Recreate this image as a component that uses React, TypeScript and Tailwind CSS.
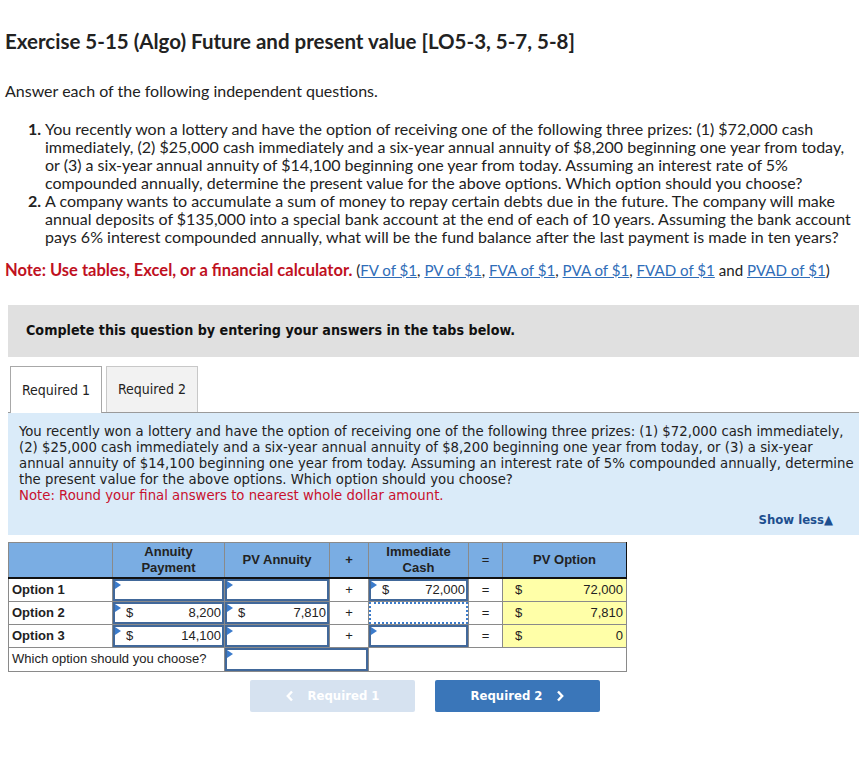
import React from "react";

const Tri = () => (
  <span className="absolute left-0 top-0 h-0 w-0 border-l-[6px] border-y-[4px] border-l-[#3b7bcb] border-y-transparent" />
);

type CellProps = {
  value?: string;
  dollar?: boolean;
  flag?: boolean;
  dotted?: boolean;
};

const InputCell = ({ value, dollar, flag = true, dotted }: CellProps) => (
  <td className="border border-[#8a8a8a] p-0 align-middle">
    <div
      className={
        "relative flex h-[22px] items-center justify-between border-2 bg-white pl-[11px] pr-[1px] " +
        (dotted ? "border-dotted border-[#3b7bcb]" : "border-[#41689a]")
      }
    >
      {flag && <Tri />}
      <span>{dollar ? "$" : ""}</span>
      <span>{value}</span>
    </div>
  </td>
);

const Sign = ({ s }: { s: string }) => (
  <td className="border border-[#8a8a8a] bg-white text-center">{s}</td>
);

const PvCell = ({ value }: { value: string }) => (
  <td className="border border-[#8a8a8a] bg-[#ffffa8] p-0">
    <div className="flex items-center justify-between pl-[12px] pr-[3px]">
      <span>$</span>
      <span>{value}</span>
    </div>
  </td>
);

const Chevron = ({ dir }: { dir: "left" | "right" }) => (
  <svg width="8" height="12" viewBox="0 0 8 12" fill="none" stroke="currentColor" strokeWidth="2.4">
    {dir === "left" ? <path d="M6 1.5 1.8 6 6 10.5" /> : <path d="M2 1.5 6.2 6 2 10.5" />}
  </svg>
);

const links = ["FV of $1", "PV of $1", "FVA of $1", "PVA of $1", "FVAD of $1"];

export default function App() {
  return (
    <div className="min-h-[777px] w-[859px] overflow-hidden bg-white pb-10 pl-[5px] text-[#222] [font-family:Lato,'Open_Sans',sans-serif]">
      <h1 className="pt-[29px] text-[20.5px] font-bold leading-[24px] text-[#222]">
        Exercise 5-15 (Algo) Future and present value [LO5-3, 5-7, 5-8]
      </h1>

      <p className="mt-[29px] text-[16px] leading-[18px]">Answer each of the following independent questions.</p>

      <ol className="mt-[20px] whitespace-nowrap text-[16px] leading-[18px]">
        <li className="flex">
          <span className="w-[40px] shrink-0 pl-[23px] font-bold">1.</span>
          <span>
            You recently won a lottery and have the option of receiving one of the following three prizes: (1) $72,000 cash
            <br />
            immediately, (2) $25,000 cash immediately and a six-year annual annuity of $8,200 beginning one year from today,
            <br />
            or (3) a six-year annual annuity of $14,100 beginning one year from today. Assuming an interest rate of 5%
            <br />
            compounded annually, determine the present value for the above options. Which option should you choose?
          </span>
        </li>
        <li className="flex">
          <span className="w-[40px] shrink-0 pl-[23px] font-bold">2.</span>
          <span>
            A company wants to accumulate a sum of money to repay certain debts due in the future. The company will make
            <br />
            annual deposits of $135,000 into a special bank account at the end of each of 10 years. Assuming the bank account
            <br />
            pays 6% interest compounded annually, what will be the fund balance after the last payment is made in ten years?
          </span>
        </li>
      </ol>

      <p className="mt-[15px] text-[15.1px] leading-[18px]">
        <span className="text-[16.5px] font-bold text-[#c0111f]">Note: Use tables, Excel, or a financial calculator.</span> (
        {links.map((l, i) => (
          <React.Fragment key={l}>
            <a className="text-[#2f6db8] underline">{l}</a>
            {i < links.length - 1 ? ", " : ""}
          </React.Fragment>
        ))}{" "}
        and <a className="text-[#2f6db8] underline">PVAD of $1</a>)
      </p>

      <div className="ml-[3px] mt-[26px] flex h-[52px] items-center bg-[#e0e0e0] pl-[18px] text-[14.2px] font-bold text-[#111] [font-family:'DejaVu_Sans_Condensed','DejaVu_Sans',sans-serif]">
        Complete this question by entering your answers in the tabs below.
      </div>

      <div className="ml-[3px] mt-[9px] flex h-[47px] items-end gap-[4px] border-b border-[#9a9a9a] pl-[2px] text-[14px] [font-family:'DejaVu_Sans_Condensed','DejaVu_Sans',sans-serif]">
        <div className="-mb-px flex h-[47px] w-[92px] items-center justify-center border border-b-0 border-[#a8a8a8] bg-white">
          Required 1
        </div>
        <div className="flex h-[46px] w-[92px] items-center justify-center border border-b-0 border-[#c8c8c8] bg-[#f2f2f2]">
          Required 2
        </div>
      </div>

      <div className="ml-[3px] bg-[#daebf9] pb-[7px] pl-[11px] pt-[10px] text-[14.75px] leading-[16px] text-[#222] [font-family:'DejaVu_Sans_Condensed','DejaVu_Sans',sans-serif]">
        <p className="whitespace-nowrap">
          You recently won a lottery and have the option of receiving one of the following three prizes: (1) $72,000 cash immediately,
          <br />
          (2) $25,000 cash immediately and a six-year annual annuity of $8,200 beginning one year from today, or (3) a six-year
          <br />
          annual annuity of $14,100 beginning one year from today. Assuming an interest rate of 5% compounded annually, determine
          <br />
          the present value for the above options. Which option should you choose?
        </p>
        <p className="text-[#c8102e]">Note: Round your final answers to nearest whole dollar amount.</p>
        <div className="mt-[9px] flex justify-end pr-[26px] text-[13px] font-bold text-[#1d4f8f]">Show less▲</div>
      </div>

      <table className="ml-[3px] mt-[7px] w-[618px] table-fixed border-collapse border border-[#8a8a8a] text-[13px] leading-[16px] text-[#222] [font-family:'Liberation_Sans',Arial,sans-serif]">
        <colgroup>
          <col className="w-[104px]" />
          <col className="w-[112px]" />
          <col className="w-[105px]" />
          <col className="w-[39px]" />
          <col className="w-[100px]" />
          <col className="w-[34px]" />
          <col className="w-[124px]" />
        </colgroup>
        <thead>
          <tr className="h-[35px] bg-[#7aade3] text-center font-bold text-[#222]">
            <th className="border border-[#8a8a8a] border-b-2 border-b-[#111]"></th>
            <th className="border border-[#8a8a8a] border-b-2 border-b-[#111]">
              Annuity
              <br />
              Payment
            </th>
            <th className="border border-[#8a8a8a] border-b-2 border-b-[#111]">PV Annuity</th>
            <th className="border border-[#8a8a8a] border-b-2 border-b-[#111]">+</th>
            <th className="border border-[#8a8a8a] border-b-2 border-b-[#111]">
              Immediate
              <br />
              Cash
            </th>
            <th className="border border-[#8a8a8a] border-b-2 border-b-[#111] font-normal">=</th>
            <th className="border border-[#8a8a8a] border-b-2 border-b-[#111] border-r-[#111]">PV Option</th>
          </tr>
        </thead>
        <tbody>
          <tr>
            <td className="border border-[#8a8a8a] pl-[3px] font-bold">Option 1</td>
            <InputCell />
            <InputCell />
            <Sign s="+" />
            <InputCell dollar value="72,000" />
            <Sign s="=" />
            <PvCell value="72,000" />
          </tr>
          <tr>
            <td className="border border-[#8a8a8a] pl-[3px] font-bold">Option 2</td>
            <InputCell dollar value="8,200" />
            <InputCell dollar value="7,810" />
            <Sign s="+" />
            <InputCell dotted flag={false} />
            <Sign s="=" />
            <PvCell value="7,810" />
          </tr>
          <tr>
            <td className="border border-[#8a8a8a] pl-[3px] font-bold">Option 3</td>
            <InputCell dollar value="14,100" />
            <InputCell />
            <Sign s="+" />
            <InputCell />
            <Sign s="=" />
            <PvCell value="0" />
          </tr>
          <tr>
            <td colSpan={2} className="border border-[#8a8a8a] pl-[3px]">
              Which option should you choose?
            </td>
            <td colSpan={2} className="border border-[#8a8a8a] p-0">
              <div className="relative h-[23px] border-2 border-[#41689a] bg-white">
                <Tri />
              </div>
            </td>
            <td colSpan={3} className="border border-[#8a8a8a] bg-white"></td>
          </tr>
        </tbody>
      </table>

      <div className="ml-[245px] mt-[8px] flex gap-[20px] text-[13px] font-bold text-white [font-family:'DejaVu_Sans_Condensed','DejaVu_Sans',sans-serif]">
        <button className="flex h-[32px] w-[165px] items-center justify-center gap-[14px] rounded-[2px] bg-[#d6e2f0]">
          <Chevron dir="left" /> Required 1
        </button>
        <button className="flex h-[32px] w-[165px] items-center justify-center gap-[14px] rounded-[2px] bg-[#3a76b9]">
          Required 2 <Chevron dir="right" />
        </button>
      </div>
    </div>
  );
}
